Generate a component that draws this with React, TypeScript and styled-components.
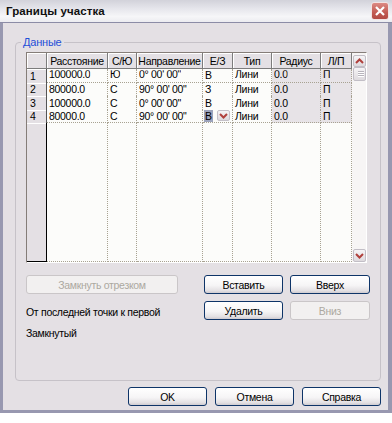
import styled, { createGlobalStyle } from 'styled-components';

const FACE = '#e4e0e4';
const FONT = '"Liberation Sans", Arial, sans-serif';

const GlobalStyle = createGlobalStyle`
  html, body { margin: 0; padding: 0; background: #ffffff; }
  body { font-family: ${FONT}; font-size: 10.5px; letter-spacing: -0.3px; color: #000; }
  * { box-sizing: border-box; }
`;

const Window = styled.div`
  width: 392px;
  height: 413px;
  display: flex;
  flex-direction: column;
  background: ${FACE};
`;

const TitleBar = styled.div`
  flex: none;
  height: 23px;
  display: flex;
  align-items: center;
  justify-content: space-between;
  padding: 0 3px 1px 6px;
  background: linear-gradient(#d2d2da, #e6e6ec 40%, #f6f6f8 75%, #ececf0);
  border-bottom: 1px solid #8c8ca6;
`;

const Title = styled.span`
  font-weight: bold;
  font-size: 11.5px;
  letter-spacing: 0.1px;
  color: #111;
`;

const CloseButton = styled.button`
  width: 18px;
  height: 18px;
  padding: 0;
  display: flex;
  align-items: center;
  justify-content: center;
  border: 1px solid #f2e4e4;
  border-radius: 3px;
  background: linear-gradient(#dc8a84, #c25a52 60%, #b24a44);
`;

const Frame = styled.div`
  flex: 1;
  display: flex;
  flex-direction: column;
  padding: 0 7px 0 12px;
  border: 3px solid #9898b0;
  border-top: none;
  border-right-width: 4px;
`;

const GroupBox = styled.div`
  margin-top: 19px;
  height: 339px;
  display: flex;
  flex-direction: column;
  padding: 0 0 0 10px;
  border: 1px solid #c6c2c8;
  border-radius: 4px;
`;

const GroupLabel = styled.span`
  align-self: flex-start;
  margin: -7px 0 0 -5px;
  padding: 0 2px;
  line-height: 13px;
  font-size: 11px;
  letter-spacing: -0.2px;
  color: #1f4fd8;
  background: ${FACE};
`;

const Grid = styled.div`
  margin-top: 3px;
  width: 341px;
  height: 211px;
  display: flex;
  border: 1px solid;
  border-color: #857d78 #ffffff #ffffff #857d78;
  background: #fcfcfa;
`;

const Table = styled.div`
  width: 325px;
  display: flex;
  flex-direction: column;
`;

const HeaderRow = styled.div`
  flex: none;
  height: 16px;
  display: flex;
`;

const HeadCell = styled.div<{ $w: number }>`
  flex: none;
  width: ${p => p.$w}px;
  height: 100%;
  display: flex;
  align-items: center;
  justify-content: center;
  white-space: nowrap;
  overflow: hidden;
  background: ${FACE};
  border-right: 1px solid #7c7c7c;
  border-bottom: 1px solid #7c7c7c;
  box-shadow: inset 1px 1px 0 #ffffff;
`;

const Row = styled.div`
  flex: none;
  height: 13.5px;
  display: flex;
`;

const RowHead = styled.div`
  flex: none;
  width: 20px;
  height: 100%;
  padding-left: 3px;
  display: flex;
  align-items: center;
  background: ${FACE};
  border-right: 1px solid #555;
  box-shadow: inset 0 1px 0 #ffffff;
`;

const Cell = styled.div<{ $w: number; $ro?: boolean; $line?: boolean }>`
  flex: none;
  width: ${p => p.$w}px;
  height: 100%;
  padding-left: 2px;
  display: flex;
  align-items: center;
  white-space: nowrap;
  overflow: hidden;
  background: ${p => (p.$ro ? '#e7e3e7' : '#fcfcfa')};
  border-right: 1px dotted #a8a292;
  border-bottom: ${p => (p.$line ? '1px dotted #a8a292' : 'none')};
`;

const CellText = styled.span<{ $clip?: boolean }>`
  ${p => (p.$clip ? 'transform: translateY(-1px); clip-path: inset(2px 0 0 0);' : '')}
`;

const Selected = styled.span`
  display: flex;
  align-items: center;
  height: 12px;
  padding: 0 1px;
  margin-left: -1px;
  background: #9ca3bc;
`;

const DropButton = styled.span`
  margin: 0 2px 0 auto;
  width: 13px;
  height: 11px;
  display: flex;
  align-items: center;
  justify-content: center;
  border: 1px solid #c4c0c8;
  border-radius: 2px;
  background: linear-gradient(#f6f4f6, #dcd8dc);
`;

const Filler = styled.div`
  flex: 1;
  display: flex;
`;

const FillerHead = styled.div`
  flex: none;
  width: 20px;
  background: ${FACE};
  border-right: 1px solid #000;
  border-bottom: 1px solid #000;
  box-shadow: inset 0 1px 0 #ffffff;
`;

const FillerCell = styled.div<{ $w: number }>`
  flex: none;
  width: ${p => p.$w}px;
  border-right: 1px dotted #a8a292;
  border-bottom: 1px dotted #a8a292;
`;

const ScrollBar = styled.div`
  width: 14px;
  display: flex;
  flex-direction: column;
  padding: 2px 0 0 1px;
  background: #f7f5f5;
`;

const ScrollButton = styled.div<{ $h?: number }>`
  flex: none;
  width: 13px;
  height: ${p => p.$h ?? 12}px;
  display: flex;
  align-items: center;
  justify-content: center;
  border: 1px solid #c2bec6;
  border-radius: 2px;
  background: linear-gradient(#f6f4f6, #dedade);
`;

const Grip = styled.span`
  width: 6px;
  height: 6px;
  margin-left: 3px;
  background: repeating-linear-gradient(#b8b4bc 0 1px, #ffffff 1px 2px);
`;

const Spacer = styled.div`
  flex: 1;
`;

const Controls = styled.div`
  margin-top: 12px;
  display: flex;
`;

const LeftColumn = styled.div`
  width: 152px;
  display: flex;
  flex-direction: column;
`;

const Caption = styled.span<{ $gap: number }>`
  margin-top: ${p => p.$gap}px;
  line-height: 14px;
  white-space: nowrap;
`;

const ButtonGrid = styled.div`
  margin-left: 26px;
  display: grid;
  grid-template-columns: 79px 80px;
  grid-auto-rows: 19px;
  column-gap: 7px;
  row-gap: 7px;
`;

const Button = styled.button<{ $w?: number }>`
  width: ${p => (p.$w ? `${p.$w}px` : '100%')};
  height: 19px;
  padding: 0;
  font-family: ${FONT};
  font-size: 10.5px;
  letter-spacing: -0.3px;
  color: #000;
  border: 1px solid #0e3468;
  border-radius: 3px;
  background: linear-gradient(#ffffff, #f6f5f6 55%, #e4e1e4 85%, #cfcbd0);
  &:disabled {
    color: #aca8a0;
    border-color: #cac6c8;
    background: #f2f0f0;
  }
`;

const Footer = styled.div`
  margin-top: 6px;
  display: flex;
  justify-content: flex-end;
  gap: 8px;
`;

const COLS = [
  { title: 'Расстояние', w: 61 },
  { title: 'С/Ю', w: 29 },
  { title: 'Направление', w: 66 },
  { title: 'Е/З', w: 30 },
  { title: 'Тип', w: 39 },
  { title: 'Радиус', w: 49, ro: true },
  { title: 'Л/П', w: 31, ro: true },
];

const ROWS = [
  ['100000.0', 'Ю', '0° 00\' 00"', 'В', 'Лини', '0.0', 'П'],
  ['80000.0', 'С', '90° 00\' 00"', 'З', 'Лини', '0.0', 'П'],
  ['100000.0', 'С', '0° 00\' 00"', 'В', 'Лини', '0.0', 'П'],
  ['80000.0', 'С', '90° 00\' 00"', 'В', 'Лини', '0.0', 'П'],
];

const Chevron = ({ up, color = '#b0403c' }: { up?: boolean; color?: string }) => (
  <svg width="9" height="6" viewBox="0 0 9 6">
    <polyline
      points={up ? '1,5 4.5,1.5 8,5' : '1,1 4.5,4.5 8,1'}
      fill="none"
      stroke={color}
      strokeWidth="2"
    />
  </svg>
);

export default function App() {
  return (
    <>
      <GlobalStyle />
      <Window>
        <TitleBar>
          <Title>Границы участка</Title>
          <CloseButton>
            <svg width="12" height="12" viewBox="0 0 12 12">
              <path d="M2 2 L10 10 M10 2 L2 10" stroke="#fff" strokeWidth="2.2" />
            </svg>
          </CloseButton>
        </TitleBar>
        <Frame>
          <GroupBox>
            <GroupLabel>Данные</GroupLabel>
            <Grid>
              <Table>
                <HeaderRow>
                  <HeadCell $w={20} />
                  {COLS.map(c => (
                    <HeadCell key={c.title} $w={c.w}>{c.title}</HeadCell>
                  ))}
                </HeaderRow>
                {ROWS.map((r, i) => (
                  <Row key={i}>
                    <RowHead>{i + 1}</RowHead>
                    {r.map((v, j) => (
                      <Cell key={j} $w={COLS[j].w} $ro={COLS[j].ro} $line={i === 0 || i === 3}>
                        {i === 3 && j === 3 ? (
                          <>
                            <Selected>{v}</Selected>
                            <DropButton><Chevron /></DropButton>
                          </>
                        ) : (
                          <CellText $clip={i === 0 && j !== 3}>{v}</CellText>
                        )}
                      </Cell>
                    ))}
                  </Row>
                ))}
                <Filler>
                  <FillerHead />
                  {COLS.map(c => (
                    <FillerCell key={c.title} $w={c.w} />
                  ))}
                </Filler>
              </Table>
              <ScrollBar>
                <ScrollButton><Chevron up /></ScrollButton>
                <ScrollButton $h={14}><Grip /></ScrollButton>
                <Spacer />
                <ScrollButton $h={13}><Chevron /></ScrollButton>
              </ScrollBar>
            </Grid>
            <Controls>
              <LeftColumn>
                <Button disabled>Замкнуть отрезком</Button>
                <Caption $gap={11}>От последней точки к первой</Caption>
                <Caption $gap={7}>Замкнутый</Caption>
              </LeftColumn>
              <ButtonGrid>
                <Button>Вставить</Button>
                <Button>Вверх</Button>
                <Button>Удалить</Button>
                <Button disabled>Вниз</Button>
              </ButtonGrid>
            </Controls>
          </GroupBox>
          <Footer>
            <Button $w={79}>OK</Button>
            <Button $w={79}>Отмена</Button>
            <Button $w={79}>Справка</Button>
          </Footer>
        </Frame>
      </Window>
    </>
  );
}
